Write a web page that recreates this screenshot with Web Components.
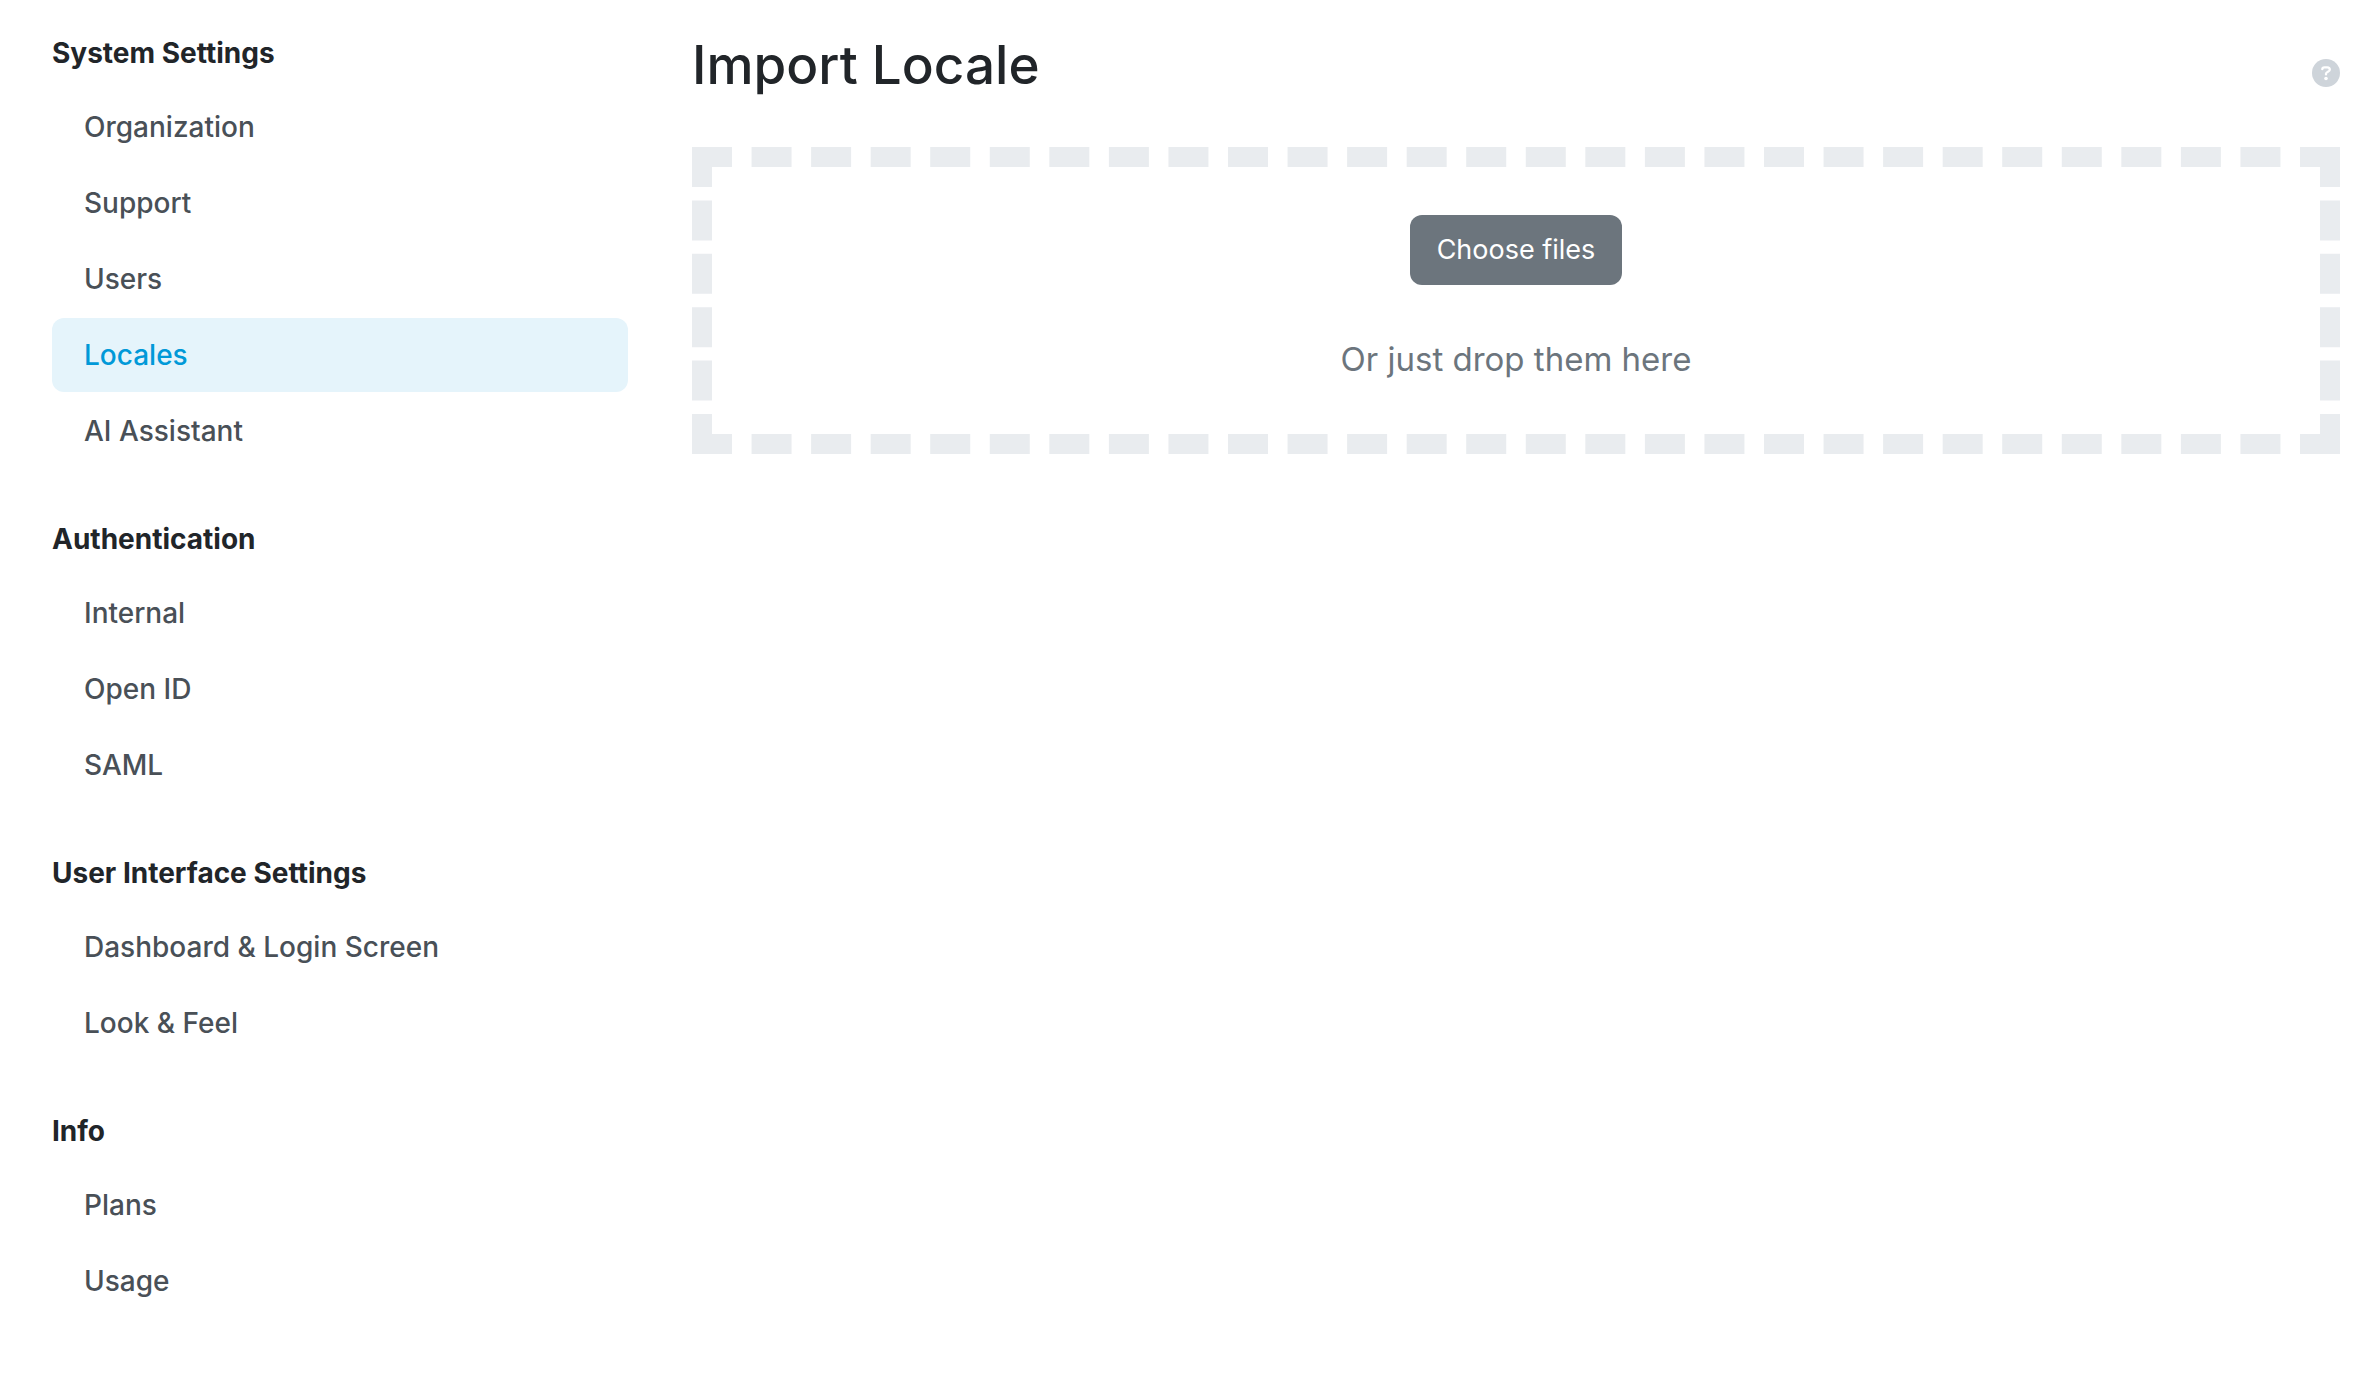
<!DOCTYPE html>
<html lang="en">
<head>
<meta charset="utf-8">
<title>Import Locale</title>
<style>
  body { margin: 0; background: #fff; color: #212529; font: 400 28px/42px Inter, "Liberation Sans", sans-serif; }
</style>
</head>
<body>
<settings-page>
  <settings-nav slot="nav">
    <nav-section heading="System Settings">
      <nav-item>Organization</nav-item>
      <nav-item>Support</nav-item>
      <nav-item>Users</nav-item>
      <nav-item active>Locales</nav-item>
      <nav-item>AI Assistant</nav-item>
    </nav-section>
    <nav-section heading="Authentication">
      <nav-item>Internal</nav-item>
      <nav-item>Open ID</nav-item>
      <nav-item>SAML</nav-item>
    </nav-section>
    <nav-section heading="User Interface Settings">
      <nav-item>Dashboard &amp; Login Screen</nav-item>
      <nav-item>Look &amp; Feel</nav-item>
    </nav-section>
    <nav-section heading="Info">
      <nav-item>Plans</nav-item>
      <nav-item>Usage</nav-item>
    </nav-section>
  </settings-nav>
  <page-header>Import Locale</page-header>
  <file-drop>Or just drop them here</file-drop>
</settings-page>
<script>
  const define = (name, html, setup) => {
    const template = document.createElement('template');
    template.innerHTML = html;
    customElements.define(name, class extends HTMLElement {
      connectedCallback() {
        if (this.shadowRoot) return;
        this.attachShadow({ mode: 'open' }).append(template.content.cloneNode(true));
        if (setup) setup(this, this.shadowRoot);
      }
    });
  };

  define('settings-page', `
    <style>
      :host { display: grid; grid-template-columns: 36fr 103fr; gap: 64px; padding: 32px 32px 32px 52px; }
      main { display: flex; flex-direction: column; gap: 48px; min-width: 0; }
    </style>
    <slot name="nav"></slot>
    <main><slot></slot></main>`);

  define('settings-nav', `
    <style>
      :host { display: block; min-width: 0; }
      nav { display: flex; flex-direction: column; gap: 50px; }
    </style>
    <nav aria-label="Settings"><slot></slot></nav>`);

  define('nav-section', `
    <style>
      :host { display: block; }
      h2 { margin: 0 0 16px; font-size: 28px; line-height: 42px; font-weight: 700; }
      div { display: flex; flex-direction: column; gap: 2px; }
    </style>
    <h2></h2>
    <div><slot></slot></div>`,
    (el, root) => { root.querySelector('h2').textContent = el.getAttribute('heading'); });

  define('nav-item', `
    <style>
      :host { display: block; }
      a { display: block; padding: 16px 32px; border-radius: 12px; color: #495057; font-size: 28px; font-weight: 500; text-decoration: none; }
      :host([active]) a { background: #e5f4fb; color: #0099d8; }
    </style>
    <a href="#"><slot></slot></a>`,
    (el, root) => { if (el.hasAttribute('active')) root.querySelector('a').setAttribute('aria-current', 'page'); });

  define('page-header', `
    <style>
      :host { display: flex; justify-content: space-between; align-items: flex-end; }
      h1 { margin: 0; font-size: 53px; line-height: 67px; font-weight: 500; }
      button { display: block; margin: 0 0 12px; padding: 0; border: 0; background: none; cursor: pointer; }
      svg { display: block; width: 28px; height: 28px; }
    </style>
    <h1><slot></slot></h1>
    <button type="button" aria-label="Help">
      <svg viewBox="0 0 28 28" aria-hidden="true">
        <circle cx="14" cy="14" r="14" fill="#ced4da"/>
        <path d="M10.3 10.2C10.3 8.9 11.2 8.3 12.5 8.3H15.3C16.8 8.3 17.8 9.2 17.8 10.7C17.8 12.7 14 12.8 14 14.8V15.4" fill="none" stroke="#fff" stroke-width="2.3" stroke-linecap="round" stroke-linejoin="round"/>
        <circle cx="14" cy="19.5" r="1.8" fill="#fff"/>
      </svg>
    </button>`);

  define('file-drop', `
    <style>
      :host { display: flex; flex-direction: column; align-items: center; gap: 48px; padding: 48px; border: 20px dashed #e9ecef; }
      button { padding: 14px 27px; border: 0; border-radius: 12px; background: #6c757d; color: #fff; font: inherit; font-size: 27px; line-height: 42px; cursor: pointer; }
      p { margin: 0; color: #6c757d; font-size: 33px; line-height: 53px; }
    </style>
    <button type="button">Choose files</button>
    <p><slot></slot></p>`);
</script>
</body>
</html>
